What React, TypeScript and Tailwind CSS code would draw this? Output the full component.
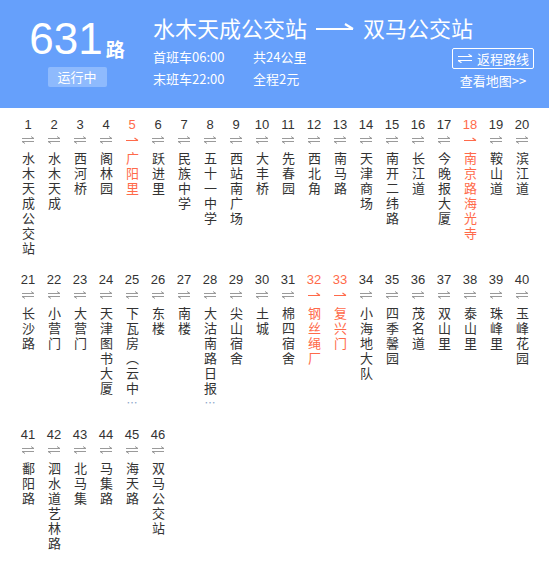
import React from 'react';

type Stop = { no: number; name: string; hot?: boolean; more?: boolean };

const rows: Stop[][] = [
  [
    { no: 1, name: '水木天成公交站' },
    { no: 2, name: '水木天成' },
    { no: 3, name: '西河桥' },
    { no: 4, name: '阁林园' },
    { no: 5, name: '广阳里', hot: true },
    { no: 6, name: '跃进里' },
    { no: 7, name: '民族中学' },
    { no: 8, name: '五十一中学' },
    { no: 9, name: '西站南广场' },
    { no: 10, name: '大丰桥' },
    { no: 11, name: '先春园' },
    { no: 12, name: '西北角' },
    { no: 13, name: '南马路' },
    { no: 14, name: '天津商场' },
    { no: 15, name: '南开二纬路' },
    { no: 16, name: '长江道' },
    { no: 17, name: '今晚报大厦' },
    { no: 18, name: '南京路海光寺', hot: true },
    { no: 19, name: '鞍山道' },
    { no: 20, name: '滨江道' },
  ],
  [
    { no: 21, name: '长沙路' },
    { no: 22, name: '小营门' },
    { no: 23, name: '大营门' },
    { no: 24, name: '天津图书大厦' },
    { no: 25, name: '下瓦房（云中', more: true },
    { no: 26, name: '东楼' },
    { no: 27, name: '南楼' },
    { no: 28, name: '大沽南路日报', more: true },
    { no: 29, name: '尖山宿舍' },
    { no: 30, name: '土城' },
    { no: 31, name: '棉四宿舍' },
    { no: 32, name: '钢丝绳厂', hot: true },
    { no: 33, name: '复兴门', hot: true },
    { no: 34, name: '小海地大队' },
    { no: 35, name: '四季馨园' },
    { no: 36, name: '茂名道' },
    { no: 37, name: '双山里' },
    { no: 38, name: '泰山里' },
    { no: 39, name: '珠峰里' },
    { no: 40, name: '玉峰花园' },
  ],
  [
    { no: 41, name: '鄱阳路' },
    { no: 42, name: '泗水道艺林路' },
    { no: 43, name: '北马集' },
    { no: 44, name: '马集路' },
    { no: 45, name: '海天路' },
    { no: 46, name: '双马公交站' },
  ],
];

const BothWays = () => (
  <svg width="14" height="8" viewBox="0 0 14 8" fill="none" stroke="#9a9a9a" strokeWidth="1">
    <path d="M1 2.5h12M13 2.5l-3-2" />
    <path d="M1 5.5h12M1 5.5l3 2" />
  </svg>
);

const OneWay = () => (
  <svg width="14" height="8" viewBox="0 0 14 8" fill="none" stroke="#ff6a4a" strokeWidth="1.2">
    <path d="M1 4.5h12M13 4.5l-3.5-2.5" />
  </svg>
);

const StopCol = ({ s }: { s: Stop }) => (
  <div className={`w-[26px] flex flex-col items-center ${s.hot ? 'text-[#ff6a4a]' : 'text-[#333]'}`}>
    <div className="text-[13px] leading-[16px] font-['Liberation_Sans',sans-serif]">{s.no}</div>
    <div className="mt-[3px] h-[8px] flex items-center">{s.hot ? <OneWay /> : <BothWays />}</div>
    <div className="mt-[8px] text-[13px] leading-[20px] tracking-[2px] [writing-mode:vertical-rl] [text-orientation:upright] [font-feature-settings:'vert'_0]">
      {s.name}
    </div>
    {s.more && <div className="text-[#8aa4c8] text-[11px] leading-[12px] -mt-[1px]">…</div>}
  </div>
);

const ReturnIcon = () => (
  <svg width="16" height="9" viewBox="0 0 16 9" fill="none" stroke="white" strokeWidth="1.2">
    <path d="M1 2.5h14M15 2.5l-3.5-2.2" />
    <path d="M1 6.5h14M1 6.5l3.5 2.2" />
  </svg>
);

export default function App() {
  return (
    <div className="w-[549px] h-[569px] bg-white font-['Noto_Sans_CJK_SC','Liberation_Sans',sans-serif] overflow-hidden">
      <header className="h-[108px] bg-[#66a0fb] text-white flex px-[15px]">
        <div className="w-[124px] flex flex-col items-center pt-[17px]">
          <div className="flex items-end">
            <span className="text-[44px] leading-[44px] font-['Liberation_Sans',sans-serif]">631</span>
            <span className="text-[19px] leading-[22px] font-bold ml-[3px] mb-[1px]">路</span>
          </div>
          <div className="mt-[6px] w-[59px] h-[20px] rounded-[2px] bg-[#8ebafd] text-[13px] leading-[20px] text-center">
            运行中
          </div>
        </div>
        <div className="flex-1 ml-[14px] pt-[14px]">
          <div className="flex items-center text-[22px] leading-[26px]">
            <span>水木天成公交站</span>
            <svg className="mx-[9px]" width="38" height="12" viewBox="0 0 38 12" fill="none" stroke="white" strokeWidth="2.2">
              <path d="M0 8h37M37 8l-8-5" />
            </svg>
            <span>双马公交站</span>
          </div>
          <div className="flex mt-[9px]">
            <div className="grid grid-cols-[100px_100px] gap-y-[5px] text-[13px] leading-[16px]">
              <span>首班车06:00</span>
              <span>共24公里</span>
              <span>末班车22:00</span>
              <span>全程2元</span>
            </div>
            <div className="ml-auto flex flex-col items-center -mt-[1px]">
              <div className="w-[82px] h-[21px] border border-white rounded-[2px] flex items-center justify-center gap-[4px] text-[13px]">
                <ReturnIcon />
                <span>返程路线</span>
              </div>
              <div className="mt-[4px] text-[13px] leading-[15px]">查看地图&gt;&gt;</div>
            </div>
          </div>
        </div>
      </header>
      <div className="pl-[15px] pt-[9px]">
        {rows.map((r, i) => (
          <div key={i} className="h-[155px] flex">
            {r.map(s => (
              <StopCol key={s.no} s={s} />
            ))}
          </div>
        ))}
      </div>
    </div>
  );
}
